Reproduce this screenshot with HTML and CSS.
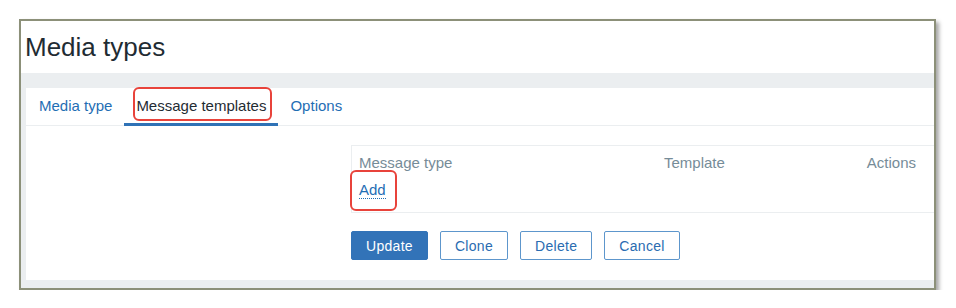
FILE: index.html
```html
<!DOCTYPE html>
<html>
	<head>
		<title>Media types</title>
		<meta charset="UTF-8"/>
		<link rel="stylesheet" href="styles.css">
	</head>
	<body>
		<div class="frame">
			<div class="header">
				<h1 class="title">Media types</h1>
			</div>
			<div class="band"></div>
			<div class="panel">
				<div class="tabs">
					<a class="tab first">Media type</a>
					<a class="tab active"><span class="callout tabCallout">Message templates</span></a>
					<a class="tab">Options</a>
				</div>
				<div class="form">
					<div class="templates">
						<div class="cell head">Message type</div>
						<div class="cell head">Template</div>
						<div class="cell head actions">Actions</div>
						<div class="cell addRow"><span class="callout addCallout"><a class="link">Add</a></span></div>
					</div>
					<div class="buttons">
						<button class="btn primary">Update</button>
						<button class="btn">Clone</button>
						<button class="btn">Delete</button>
						<button class="btn">Cancel</button>
					</div>
				</div>
			</div>
		</div>
	</body>
</html>
```

FILE: styles.css
```css
html, body {
	margin: 0;
	background-color: #ffffff;
	font-family: "Liberation Sans", Arial, Helvetica, sans-serif;
}

/* outer screenshot frame */
.frame {
	margin: 19px 0 0 19px;
	width: 913px;
	height: 267px;
	border: 2px solid #8c9079;
	background-color: #ebeef0;
	box-shadow: 3px 3px 4px rgba(0, 0, 0, 0.35);
	display: flex;
	flex-direction: column;
}

.header {
	height: 52px;
	flex: none;
	background-color: #ffffff;
	display: flex;
	align-items: center;
	padding-left: 4px;
}

.title {
	margin: 0;
	font-size: 26px;
	font-weight: normal;
	color: #1f2c33;
}

.band {
	height: 15px;
	flex: none;
}

.panel {
	margin-left: 5px;
	background-color: #ffffff;
	height: 192px;
	flex: none;
}

.tabs {
	display: flex;
	box-sizing: border-box;
	height: 38px;
	border-bottom: 1px solid #ebeef0;
}

.tab {
	display: flex;
	align-items: center;
	box-sizing: border-box;
	height: 38px;
	padding: 0 12px 1px 12px;
	font-size: 15px;
	color: #1f6eb4;
	border-bottom: 3px solid transparent;
}

.tab.first {
	padding-left: 13px;
}

.tab.active {
	color: #1f2c33;
	border-bottom-color: #2f72b6;
}

.callout {
	position: relative;
}

.callout::after {
	content: "";
	position: absolute;
	border: 2px solid #e8433b;
	border-radius: 6px;
}

.tabCallout::after {
	top: -10px;
	bottom: -7px;
	left: -3px;
	right: -6px;
}

.addCallout::after {
	top: -11px;
	bottom: -13px;
	left: -9px;
	right: -11px;
}

.form {
	padding: 19px 0 20px 325px;
}

.templates {
	display: grid;
	grid-template-columns: 305px 1fr auto;
	border: 1px solid #ebeef0;
	border-right: none;
	padding: 0 18px 0 7px;
	font-size: 15px;
	line-height: 17px;
}

.head {
	color: #768c98;
	padding-top: 8px;
}

.actions {
	text-align: right;
}

.addRow {
	grid-column: 1 / 4;
	padding: 10px 0 14px 0;
}

.link {
	color: #1f6eb4;
	border-bottom: 1px dotted #1f6eb4;
}

.buttons {
	display: flex;
	gap: 12px;
	margin-top: 18px;
}

.btn {
	height: 29px;
	padding: 0 14px;
	font-family: inherit;
	font-size: 14px;
	letter-spacing: 0.3px;
	color: #2a6cb1;
	background-color: #ffffff;
	border: 1px solid #5d96cc;
	border-radius: 2px;
}

.btn.primary {
	color: #ffffff;
	background-color: #3273b8;
	border-color: #3273b8;
}
```
